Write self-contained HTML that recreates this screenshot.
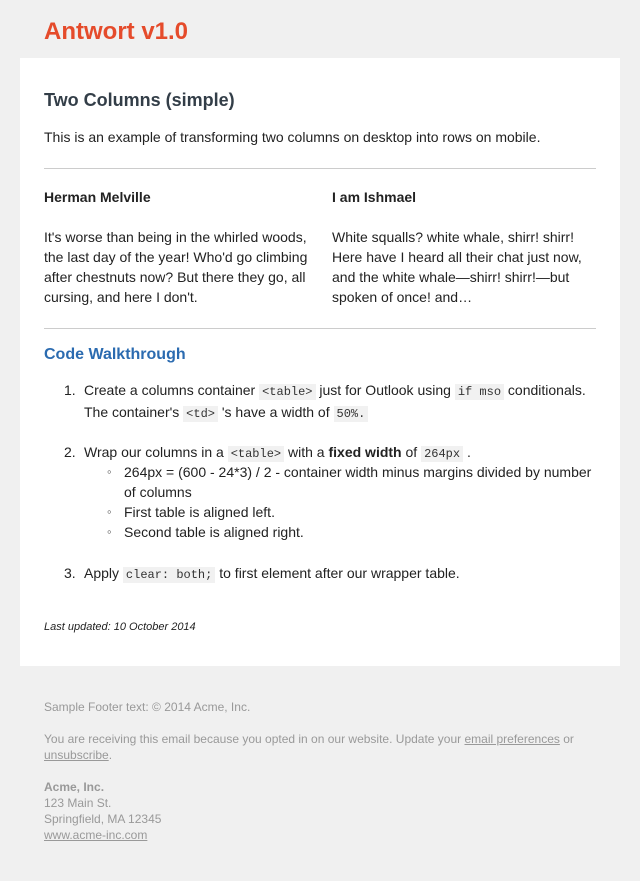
<!DOCTYPE html>
<html><head><meta charset="utf-8"><style>
*{margin:0;padding:0;box-sizing:border-box}
body{width:640px;height:881px;background:#f0f0f0;font-family:"Liberation Sans",sans-serif;color:#222;font-size:14px;line-height:20px;position:relative;overflow:hidden}
.a{position:absolute;white-space:nowrap}
.card{position:absolute;left:20px;top:58px;width:600px;height:608px;background:#fff}
code{font-family:"Liberation Mono",monospace;font-size:12px;background:#f1f1f1;padding:1px 3px;color:#333}
hr{position:absolute;left:44px;width:552px;border:0;border-top:1px solid #ccc}
.f{color:#999;font-size:12px;line-height:16px}
.f u{color:#999}
.b{font-size:13px;color:#555}
</style></head><body>
<div class="a" style="left:44px;top:17px;font-size:24px;line-height:30px;font-weight:bold;color:#e54b2b">Antwort v1.0</div>
<div class="card"></div>
<div class="a" style="left:44px;top:89px;font-size:18px;line-height:22px;font-weight:bold;color:#333e48">Two Columns (simple)</div>
<div class="a" style="left:44px;top:127px">This is an example of transforming two columns on desktop into rows on mobile.</div>
<hr style="top:168px">
<div class="a" style="left:44px;top:187px;font-weight:bold">Herman Melville</div>
<div class="a" style="left:332px;top:187px;font-weight:bold">I am Ishmael</div>
<div class="a" style="left:44px;top:227px">It's worse than being in the whirled woods,<br>the last day of the year! Who'd go climbing<br>after chestnuts now? But there they go, all<br>cursing, and here I don't.</div>
<div class="a" style="left:332px;top:227px">White squalls? white whale, shirr! shirr!<br>Here have I heard all their chat just now,<br>and the white whale—shirr! shirr!—but<br>spoken of once! and…</div>
<hr style="top:328px">
<div class="a" style="left:44px;top:345px;font-size:16px;line-height:20px;font-weight:bold;color:#2b6bb0">Code Walkthrough</div>
<div class="a" style="left:64px;top:380px">1.</div>
<div class="a" style="left:84px;top:380px">Create a columns container <code>&lt;table&gt;</code> just for Outlook using <code>if mso</code> conditionals.<br>The container's <code>&lt;td&gt;</code> 's have a width of <code>50%.</code></div>
<div class="a" style="left:64px;top:442px">2.</div>
<div class="a" style="left:84px;top:442px">Wrap our columns in a <code>&lt;table&gt;</code> with a <b>fixed width</b> of <code>264px</code> .</div>
<div class="a b" style="left:107px;top:462px">◦</div>
<div class="a" style="left:124px;top:462px">264px = (600 - 24*3) / 2 - container width minus margins divided by number<br>of columns</div>
<div class="a b" style="left:107px;top:502px">◦</div>
<div class="a" style="left:124px;top:502px">First table is aligned left.</div>
<div class="a b" style="left:107px;top:522px">◦</div>
<div class="a" style="left:124px;top:522px">Second table is aligned right.</div>
<div class="a" style="left:64px;top:563px">3.</div>
<div class="a" style="left:84px;top:563px">Apply <code>clear: both;</code> to first element after our wrapper table.</div>
<div class="a" style="left:44px;top:620px;font-size:11px;line-height:14px;font-style:italic">Last updated: 10 October 2014</div>
<div class="a f" style="left:44px;top:699px">Sample Footer text: © 2014 Acme, Inc.</div>
<div class="a f" style="left:44px;top:731px">You are receiving this email because you opted in on our website. Update your <u>email preferences</u> or<br><u>unsubscribe</u>.</div>
<div class="a f" style="left:44px;top:779px"><b>Acme, Inc.</b><br>123 Main St.<br>Springfield, MA 12345<br><u>www.acme-inc.com</u></div>
</body></html>
